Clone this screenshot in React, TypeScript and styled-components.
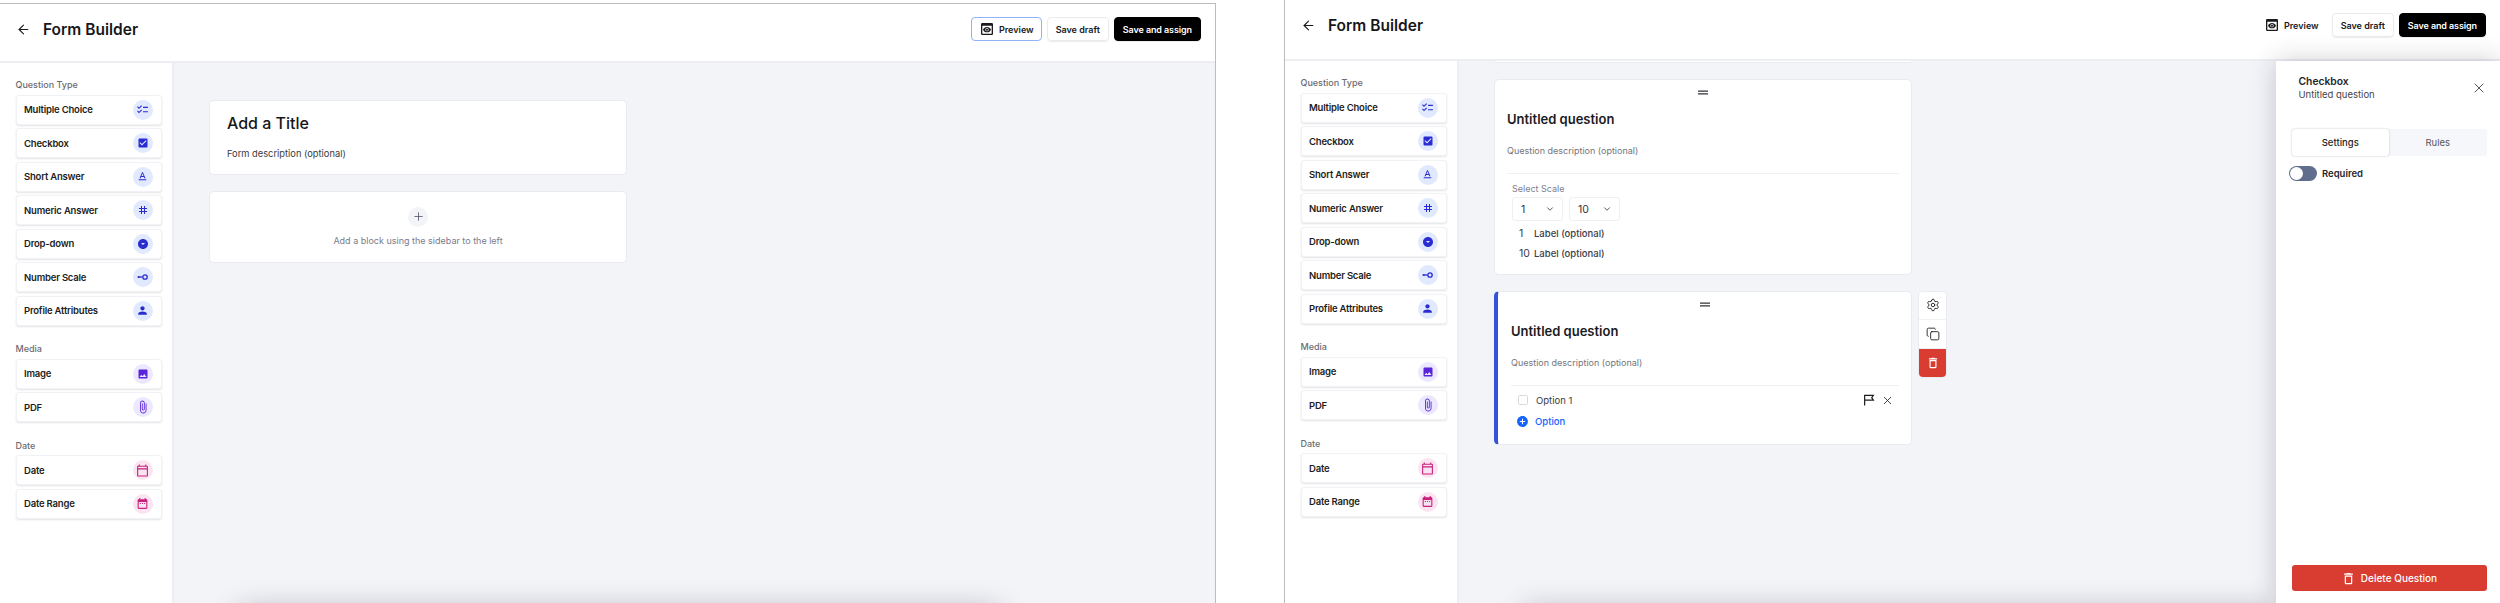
import React from 'react';
import styled, { createGlobalStyle } from 'styled-components';
import { ArrowLeft, ChevronDown, Copy, Plus, Settings, X } from 'lucide-react';
import {
  MdAddCircle,
  MdArrowDropDownCircle,
  MdAttachFile,
  MdCheckBox,
  MdChecklist,
  MdDateRange,
  MdDeleteOutline,
  MdOutlineCalendarToday,
  MdPerson,
  MdPhoto,
  MdPreview,
  MdTag,
  MdTextFormat,
} from 'react-icons/md';

const ScaleIcon = () => (
  <svg width="12" height="12" viewBox="0 0 12 12" fill="none" stroke="currentColor">
    <circle cx="1.6" cy="6" r="1.1" fill="currentColor" stroke="none" />
    <path d="M2 6h3.4" strokeWidth="1.3" />
    <circle cx="8" cy="6" r="2.2" strokeWidth="1.3" />
  </svg>
);

const FlagIcon = () => (
  <svg width="12" height="12" viewBox="0 0 11 11" fill="none" stroke="#1c1c1f" strokeWidth="1.1">
    <path d="M1.5 10.5V1.2h8L8 3.4l1.5 2.2H1.5" />
  </svg>
);

const HandleIcon = () => (
  <svg width="12" height="5" viewBox="0 0 12 5">
    <path d="M1 0.5h10v1.3H1zM1 3.2h10v1.3H1z" fill="#33343a" />
  </svg>
);

type Tone = 'blue' | 'violet' | 'pink';

const groups: { title: string; items: { label: string; tone: Tone; icon: React.ReactNode }[] }[] = [
  {
    title: 'Question Type',
    items: [
      { label: 'Multiple Choice', tone: 'blue', icon: <MdChecklist size={13} /> },
      { label: 'Checkbox', tone: 'blue', icon: <MdCheckBox size={12} /> },
      { label: 'Short Answer', tone: 'blue', icon: <MdTextFormat size={13} /> },
      { label: 'Numeric Answer', tone: 'blue', icon: <MdTag size={12} /> },
      { label: 'Drop-down', tone: 'blue', icon: <MdArrowDropDownCircle size={12} /> },
      { label: 'Number Scale', tone: 'blue', icon: <ScaleIcon /> },
      { label: 'Profile Attributes', tone: 'blue', icon: <MdPerson size={13} /> },
    ],
  },
  {
    title: 'Media',
    items: [
      { label: 'Image', tone: 'violet', icon: <MdPhoto size={12} /> },
      { label: 'PDF', tone: 'violet', icon: <MdAttachFile size={14} /> },
    ],
  },
  {
    title: 'Date',
    items: [
      { label: 'Date', tone: 'pink', icon: <MdOutlineCalendarToday size={13} /> },
      { label: 'Date Range', tone: 'pink', icon: <MdDateRange size={13} /> },
    ],
  },
];

const Sidebar = () => (
  <SideColumn>
    {groups.map((group) => (
      <Group key={group.title}>
        <GroupTitle>{group.title}</GroupTitle>
        {group.items.map((item) => (
          <TypeCard key={item.label}>
            {item.label}
            <IconBubble $tone={item.tone}>{item.icon}</IconBubble>
          </TypeCard>
        ))}
      </Group>
    ))}
  </SideColumn>
);

const Header = ({ focused, height }: { focused: boolean; height: number }) => (
  <TopBar $height={height}>
    <TitleRow>
      <ArrowLeft size={15} strokeWidth={1.7} color="#1b1b1f" />
      <PageTitle>Form Builder</PageTitle>
    </TitleRow>
    <Actions>
      <PreviewButton $focused={focused}>
        <MdPreview size={16} />
        Preview
      </PreviewButton>
      <DraftButton>Save draft</DraftButton>
      <AssignButton>Save and assign</AssignButton>
    </Actions>
  </TopBar>
);

function App() {
  return (
    <Page>
      <GlobalStyle />
      <LeftFrame>
        <Header focused height={59} />
        <Body>
          <Sidebar />
          <Canvas $top={37}>
            <TitleCard>
              <FormTitle>Add a Title</FormTitle>
              <FormDescription>Form description (optional)</FormDescription>
            </TitleCard>
            <AddBlockCard>
              <PlusBubble>
                <Plus size={13} strokeWidth={1.4} />
              </PlusBubble>
              <AddBlockText>Add a block using the sidebar to the left</AddBlockText>
            </AddBlockCard>
            <BottomShade />
          </Canvas>
        </Body>
      </LeftFrame>

      <RightFrame>
        <Header focused={false} height={61} />
        <Body>
          <Sidebar />
          <Canvas $top={0}>
            <PeekCard />
            <QuestionCard>
              <Handle>
                <HandleIcon />
              </Handle>
              <QuestionTitle>Untitled question</QuestionTitle>
              <QuestionDescription>Question description (optional)</QuestionDescription>
              <Divider />
              <ScaleBlock>
                <ScaleLabel>Select Scale</ScaleLabel>
                <SelectRow>
                  <ScaleSelect>
                    1
                    <ChevronDown size={10} strokeWidth={2} />
                  </ScaleSelect>
                  <ScaleSelect>
                    10
                    <ChevronDown size={10} strokeWidth={2} />
                  </ScaleSelect>
                </SelectRow>
                <ScaleRow>
                  <ScaleNumber>1</ScaleNumber>Label (optional)
                </ScaleRow>
                <ScaleRow>
                  <ScaleNumber>10</ScaleNumber>Label (optional)
                </ScaleRow>
              </ScaleBlock>
            </QuestionCard>
            <ActiveRow>
              <ActiveCard>
                <Handle>
                  <HandleIcon />
                </Handle>
                <QuestionTitle>Untitled question</QuestionTitle>
                <QuestionDescription>Question description (optional)</QuestionDescription>
                <Divider />
                <OptionRow>
                  <CheckSquare />
                  <OptionText>Option 1</OptionText>
                  <OptionTools>
                    <FlagIcon />
                    <X size={13} strokeWidth={1.5} color="#1c1c1f" />
                  </OptionTools>
                </OptionRow>
                <AddOption>
                  <MdAddCircle size={13} />
                  Option
                </AddOption>
              </ActiveCard>
              <ToolColumn>
                <ToolButton>
                  <Settings size={14} strokeWidth={1.5} />
                </ToolButton>
                <ToolButton>
                  <Copy size={14} strokeWidth={1.5} />
                </ToolButton>
                <ToolButton $danger>
                  <MdDeleteOutline size={14} />
                </ToolButton>
              </ToolColumn>
            </ActiveRow>
            <BottomShade />
          </Canvas>
        </Body>
        <Drawer>
          <DrawerHead>
            <div>
              <DrawerTitle>Checkbox</DrawerTitle>
              <DrawerSub>Untitled question</DrawerSub>
            </div>
            <X size={16} strokeWidth={1.2} color="#2b2b30" />
          </DrawerHead>
          <Tabs>
            <Tab $active>Settings</Tab>
            <Tab>Rules</Tab>
          </Tabs>
          <ToggleRow>
            <ToggleTrack>
              <ToggleKnob />
            </ToggleTrack>
            Required
          </ToggleRow>
          <DeleteButton>
            <MdDeleteOutline size={15} />
            Delete Question
          </DeleteButton>
        </Drawer>
      </RightFrame>
    </Page>
  );
}

export default App;

const GlobalStyle = createGlobalStyle`
  html, body {
    margin: 0;
    padding: 0;
    background: #ffffff;
    font-family: Inter, "Liberation Sans", sans-serif;
  }
  * {
    box-sizing: border-box;
  }
`;

const Page = styled.div`
  display: flex;
  width: 2500px;
  height: 603px;
  overflow: hidden;
  background: #ffffff;
`;

const LeftFrame = styled.div`
  display: flex;
  flex-direction: column;
  flex: 0 0 1217px;
  margin: 3px 0 0 -1px;
  border-top: 1px solid #bcbcbc;
  border-right: 1px solid #bcbcbc;
  border-left: 1px solid #eeeeee;
  overflow: hidden;
`;

const RightFrame = styled.div`
  position: relative;
  display: flex;
  flex-direction: column;
  flex: 1;
  margin-left: 68px;
  border-left: 1px solid #bcbcbc;
  overflow: hidden;
`;

const TopBar = styled.header<{ $height: number }>`
  display: flex;
  flex: 0 0 ${(p) => p.$height}px;
  justify-content: space-between;
  align-items: flex-start;
  padding: 13px 14px 0 16px;
  border-bottom: 2px solid #eceef2;
  background: #ffffff;
`;

const TitleRow = styled.div`
  display: flex;
  align-items: center;
  gap: 12px;
  height: 24px;
`;

const PageTitle = styled.h1`
  margin: 0;
  font-size: 15.5px;
  font-weight: 600;
  color: #17171a;
`;

const Actions = styled.div`
  display: flex;
  gap: 5px;
`;

const PreviewButton = styled.div<{ $focused: boolean }>`
  display: flex;
  align-items: center;
  gap: 4px;
  height: 24px;
  padding: 0 7px 0 7px;
  border: 1px solid ${(p) => (p.$focused ? '#8fb2f5' : 'transparent')};
  border-radius: 4px;
  background: #ffffff;
  font-size: 9px;
  font-weight: 600;
  color: #1a1a1e;
`;

const DraftButton = styled.div`
  display: flex;
  align-items: center;
  height: 24px;
  padding: 0 8px;
  border: 1px solid #e9ebef;
  border-radius: 4px;
  box-shadow: 0 1px 1px rgba(20, 20, 40, 0.08);
  font-size: 9px;
  font-weight: 600;
  color: #1a1a1e;
`;

const AssignButton = styled(DraftButton)`
  border-color: #000000;
  background: #000000;
  letter-spacing: -0.1px;
  color: #ffffff;
`;

const Body = styled.div`
  display: flex;
  flex: 1;
  min-height: 0;
`;

const SideColumn = styled.aside`
  display: flex;
  flex: 0 0 174px;
  flex-direction: column;
  gap: 16.5px;
  padding: 15px 10.5px 0 15.5px;
  border-right: 2px solid #eceef2;
  background: #ffffff;
`;

const Group = styled.section`
  display: flex;
  flex-direction: column;
  gap: 3.5px;
`;

const GroupTitle = styled.div`
  height: 13px;
  line-height: 13px;
  font-size: 9px;
  font-weight: 500;
  color: #6b6c72;
`;

const TypeCard = styled.div`
  display: flex;
  justify-content: space-between;
  align-items: center;
  height: 30px;
  padding: 0 8px 0 7.5px;
  border: 1px solid #f1f2f5;
  border-radius: 3px;
  box-shadow: 0 1px 2px rgba(30, 30, 60, 0.12);
  background: #ffffff;
  font-size: 9.5px;
  letter-spacing: -0.2px;
  font-weight: 600;
  color: #1d1d21;
`;

const toneBg = { blue: '#e1e9ff', violet: '#ebe8ff', pink: '#fbe4f1' };
const toneFg = { blue: '#2a2bd0', violet: '#5a24d8', pink: '#c81f78' };

const IconBubble = styled.span<{ $tone: Tone }>`
  display: flex;
  justify-content: center;
  align-items: center;
  width: 20px;
  height: 20px;
  border-radius: 50%;
  background: ${(p) => toneBg[p.$tone]};
  color: ${(p) => toneFg[p.$tone]};
`;

const Canvas = styled.main<{ $top: number }>`
  position: relative;
  display: flex;
  flex: 1;
  flex-direction: column;
  gap: 15.5px;
  padding: ${(p) => p.$top}px 0 0 35px;
  background: #f2f4f8;
`;

const BottomShade = styled.div`
  position: absolute;
  top: calc(100% + 8px);
  left: 65px;
  width: 760px;
  height: 60px;
  box-shadow: 0 0 30px rgba(20, 20, 30, 0.3);
`;

const PanelCard = styled.div`
  width: 418px;
  border: 1px solid #e9ebf0;
  border-radius: 5px;
  background: #ffffff;
`;

const TitleCard = styled(PanelCard)`
  height: 75px;
  padding: 12px 17px;
`;

const FormTitle = styled.div`
  font-size: 16px;
  line-height: 20px;
  font-weight: 500;
  color: #17171a;
`;

const FormDescription = styled.div`
  margin-top: 13.5px;
  font-size: 9.3px;
  line-height: 14px;
  color: #3a3b40;
`;

const AddBlockCard = styled(PanelCard)`
  display: flex;
  flex-direction: column;
  align-items: center;
  height: 72px;
  padding-top: 15px;
`;

const PlusBubble = styled.span`
  display: flex;
  justify-content: center;
  align-items: center;
  width: 20px;
  height: 20px;
  border-radius: 50%;
  background: #f2f4f8;
  color: #4a4b60;
`;

const AddBlockText = styled.div`
  margin-top: 7px;
  font-size: 9px;
  line-height: 14px;
  color: #7b7c8c;
`;

const PeekCard = styled(PanelCard)`
  height: 2px;
  margin-left: 0;
  border-width: 0 1px 1px;
  border-radius: 0 0 5px 5px;
`;

const QuestionCard = styled(PanelCard)`
  height: 196.5px;
  padding: 8px 12px 0 12px;
`;

const Handle = styled.div`
  display: flex;
  justify-content: center;
  height: 11px;
  margin-top: 2px;
`;

const QuestionTitle = styled.div`
  margin-top: 10px;
  font-size: 13px;
  line-height: 16px;
  font-weight: 600;
  color: #1b1b1f;
`;

const QuestionDescription = styled.div`
  margin-top: 17px;
  font-size: 9px;
  line-height: 14px;
  color: #74757c;
`;

const Divider = styled.div`
  height: 1px;
  margin-top: 15.5px;
  background: #eef0f3;
`;

const ScaleBlock = styled.div`
  padding: 9px 0 0 5px;
`;

const ScaleLabel = styled.div`
  font-size: 9px;
  line-height: 12px;
  color: #7e7f90;
`;

const SelectRow = styled.div`
  display: flex;
  gap: 6px;
  margin: 2px 0 3px;
`;

const ScaleSelect = styled.div`
  display: flex;
  justify-content: space-between;
  align-items: center;
  width: 51px;
  height: 24px;
  padding: 0 7px 0 8px;
  border: 1px solid #eef0f3;
  border-radius: 3px;
  font-size: 10.5px;
  color: #35363c;
`;

const ScaleRow = styled.div`
  display: flex;
  align-items: center;
  height: 19.5px;
  padding-left: 7px;
  font-size: 9.5px;
  font-weight: 500;
  color: #3c3d48;
`;

const ScaleNumber = styled.span`
  width: 15px;
  font-size: 10.5px;
  font-weight: 400;
`;

const ActiveRow = styled.div`
  display: flex;
  align-items: flex-start;
  gap: 6px;
`;

const ActiveCard = styled(PanelCard)`
  height: 154px;
  padding: 8px 12px 0 13px;
  border-left: 4px solid #3354d9;
`;

const OptionRow = styled.div`
  display: flex;
  align-items: center;
  height: 28px;
  padding-left: 7px;
`;

const CheckSquare = styled.span`
  width: 10px;
  height: 10px;
  border: 1px solid #d5d8df;
  border-radius: 1.5px;
`;

const OptionText = styled.span`
  margin-left: 8px;
  font-size: 9.5px;
  color: #3a3b40;
`;

const OptionTools = styled.span`
  display: flex;
  align-items: center;
  gap: 6px;
  margin-left: auto;
  padding-right: 5px;
`;

const AddOption = styled.div`
  display: flex;
  align-items: center;
  gap: 6px;
  height: 14px;
  padding-left: 5px;
  font-size: 9.5px;
  font-weight: 500;
  color: #1463ff;
`;

const ToolColumn = styled.div`
  width: 29px;
  border: 1px solid #e9ebf0;
  border-radius: 5px;
  overflow: hidden;
  background: #ffffff;
`;

const ToolButton = styled.div<{ $danger?: boolean }>`
  display: flex;
  justify-content: center;
  align-items: center;
  height: 28.5px;
  border-bottom: 1px solid #eef0f3;
  background: ${(p) => (p.$danger ? '#d93c30' : '#ffffff')};
  color: ${(p) => (p.$danger ? '#ffffff' : '#1c1c1f')};

  &:last-child {
    border-bottom: none;
  }
`;

const Drawer = styled.aside`
  position: absolute;
  top: 61px;
  right: 0;
  bottom: 0;
  display: flex;
  flex-direction: column;
  width: 224px;
  padding: 0 13.5px 12px 15.5px;
  background: #ffffff;
  box-shadow: 0 0 24px rgba(30, 34, 50, 0.22);
`;

const DrawerHead = styled.div`
  display: flex;
  justify-content: space-between;
  align-items: center;
  padding: 13px 0 0 7px;
`;

const DrawerTitle = styled.div`
  font-size: 10.3px;
  line-height: 14px;
  font-weight: 600;
  color: #26262b;
`;

const DrawerSub = styled.div`
  font-size: 9.5px;
  line-height: 14px;
  color: #44454b;
`;

const Tabs = styled.div`
  display: grid;
  grid-template-columns: 1fr 1fr;
  height: 27px;
  margin-top: 27px;
  border-radius: 3px;
  background: #f5f7fa;
`;

const Tab = styled.div<{ $active?: boolean }>`
  display: flex;
  justify-content: center;
  align-items: center;
  border-radius: 3px;
  background: ${(p) => (p.$active ? '#ffffff' : 'transparent')};
  box-shadow: ${(p) => (p.$active ? '0 0 2px rgba(30, 30, 60, 0.3)' : 'none')};
  font-size: 9.5px;
  font-weight: ${(p) => (p.$active ? 500 : 400)};
  color: ${(p) => (p.$active ? '#1f1f24' : '#55565c')};
`;

const ToggleRow = styled.div`
  display: flex;
  align-items: center;
  gap: 5px;
  margin: 10px 0 0 -2.5px;
  font-size: 9.5px;
  font-weight: 600;
  color: #26262b;
`;

const ToggleTrack = styled.span`
  display: flex;
  align-items: center;
  width: 28px;
  height: 15px;
  padding: 1px;
  border-radius: 8px;
  background: #5f6e8c;
`;

const ToggleKnob = styled.span`
  width: 13px;
  height: 13px;
  border-radius: 50%;
  background: #ffffff;
`;

const DeleteButton = styled.div`
  display: flex;
  justify-content: center;
  align-items: center;
  gap: 5px;
  height: 26px;
  margin-top: auto;
  border-radius: 3px;
  background: #d93c30;
  font-size: 10px;
  font-weight: 500;
  color: #ffffff;
`;
